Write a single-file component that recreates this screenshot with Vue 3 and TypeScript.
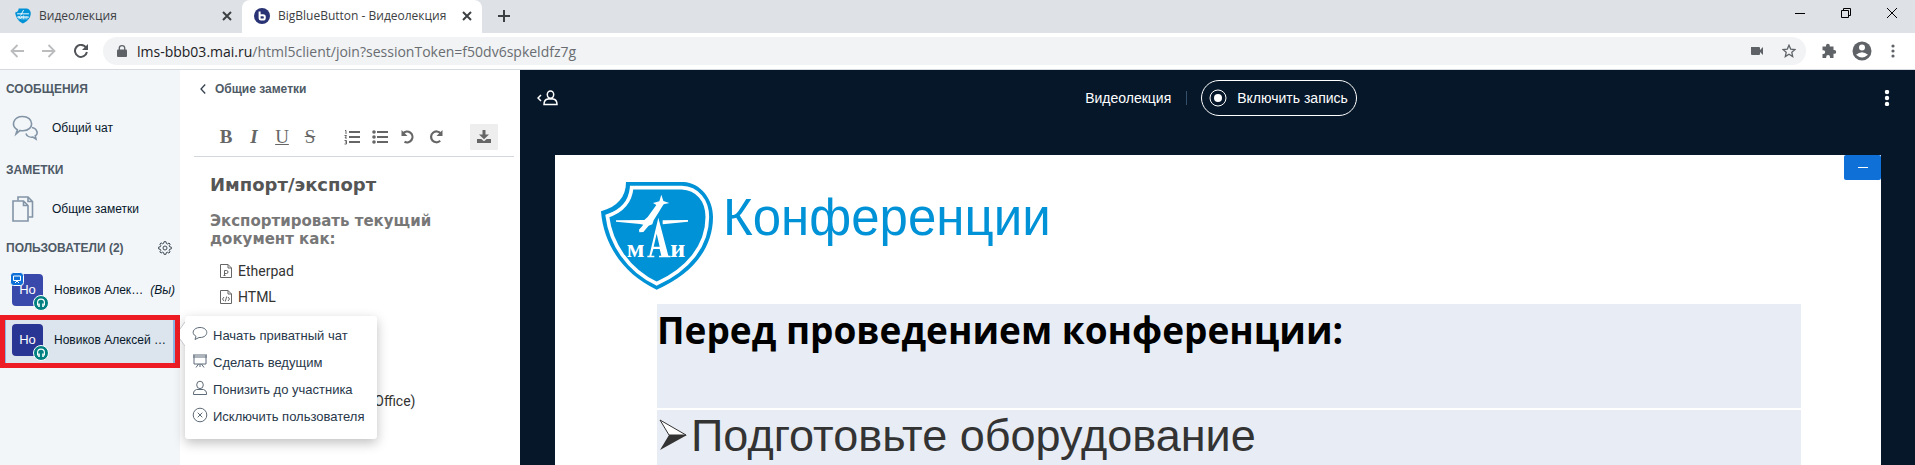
<script setup lang="ts">
interface Participant {
  id: number
  name: string
  you: boolean
  presenter: boolean
  selected: boolean
}

const participants: Participant[] = [
  { id: 1, name: 'Новиков Алексей Михайлович', you: true, presenter: true, selected: false },
  { id: 2, name: 'Новиков Алексей Михайлович', you: false, presenter: false, selected: true },
]

const actions = [
  { icon: 'chat', label: 'Начать приватный чат' },
  { icon: 'present', label: 'Сделать ведущим' },
  { icon: 'user', label: 'Понизить до участника' },
  { icon: 'remove', label: 'Исключить пользователя' },
]

const formats = [
  { label: 'Etherpad', glyph: 'P' },
  { label: 'HTML', glyph: '‹/›' },
  { label: 'ODF (Документ OpenOffice)', glyph: 'O' },
]
</script>

<template>
  <div class="window">
    <header class="tabs">
      <div class="tab">
        <svg class="favicon" viewBox="30 60 344 334" aria-hidden="true">
          <path d="M108 65H265C325 65 369 110 369 170C369 260 310 340 200 388C95 340 45 250 33 153C80 145 108 110 108 65Z" fill="#0092d7" />
          <path d="M75 180L330 180M75 250H330M215 100L150 215" stroke="#fff" stroke-width="20" fill="none" />
          <path d="M115 300V230L145 290L180 230V300M215 300V215M245 300V230M285 230V300" stroke="#fff" stroke-width="16" fill="none" />
        </svg>
        <span class="tab-title">Видеолекция</span>
        <button class="plain" aria-label="Закрыть вкладку">
          <svg width="10" height="10" viewBox="0 0 10 10"><path d="M1 1L9 9M9 1L1 9" stroke="#3c4043" stroke-width="2" /></svg>
        </button>
      </div>
      <div class="tab active">
        <svg class="favicon" viewBox="0 0 16 16" aria-hidden="true">
          <circle cx="8" cy="8" r="8" fill="#283274" />
          <path d="M5.6 3.5V10.2Q5.6 11.6 7 11.6H9Q10.8 11.6 10.8 9.7V9Q10.8 7.2 9 7.2H6" stroke="#fff" stroke-width="2" fill="none" />
        </svg>
        <span class="tab-title">BigBlueButton - Видеолекция</span>
        <button class="plain" aria-label="Закрыть вкладку">
          <svg width="10" height="10" viewBox="0 0 10 10"><path d="M1 1L9 9M9 1L1 9" stroke="#3c4043" stroke-width="2" /></svg>
        </button>
      </div>
      <button class="plain new-tab" aria-label="Новая вкладка">
        <svg width="12" height="12" viewBox="0 0 12 12"><path d="M6 0V12M0 6H12" stroke="#3c4043" stroke-width="2" /></svg>
      </button>
      <div class="window-buttons">
        <button class="plain" aria-label="Свернуть"><svg width="10" height="10" viewBox="0 0 10 10"><path d="M0 5.5H10" stroke="#000" /></svg></button>
        <button class="plain" aria-label="Восстановить"><svg width="10" height="10" viewBox="0 0 10 10"><path d="M.5 2.5H7.5V9.5H.5ZM2.5 2.5V.5H9.5V7.5H7.5" stroke="#000" fill="none" /></svg></button>
        <button class="plain" aria-label="Закрыть"><svg width="10" height="10" viewBox="0 0 10 10"><path d="M0 0L10 10M10 0L0 10" stroke="#000" /></svg></button>
      </div>
    </header>

    <nav class="toolbar" aria-label="Адресная строка">
      <button class="plain" aria-label="Назад"><svg width="14" height="14" viewBox="0 0 14 14"><path d="M14 7H1.5M7.5 1L1.5 7L7.5 13" stroke="#babcbe" stroke-width="1.8" fill="none" /></svg></button>
      <button class="plain" aria-label="Вперёд"><svg width="14" height="14" viewBox="0 0 14 14"><path d="M0 7H12.5M6.5 1L12.5 7L6.5 13" stroke="#babcbe" stroke-width="1.8" fill="none" /></svg></button>
      <button class="plain" aria-label="Обновить"><svg width="14" height="14" viewBox="0 0 14 14"><path d="M11.9 3.4A6 6 0 1 0 12.9 8" stroke="#505357" stroke-width="2" fill="none" /><path d="M14 0V6H8Z" fill="#505357" /></svg></button>
      <div class="address">
        <svg width="10" height="12" viewBox="0 0 10 12" aria-hidden="true"><path d="M1 4.5H9Q10 4.5 10 5.5V11Q10 12 9 12H1Q0 12 0 11V5.5Q0 4.5 1 4.5Z" fill="#5f6368" /><path d="M2.3 5V3A2.7 2.3 0 0 1 7.7 3V5" stroke="#5f6368" stroke-width="1.3" fill="none" /></svg>
        <span class="url"><b>lms-bbb03.mai.ru</b>/html5client/join?sessionToken=f50dv6spkeldfz7g</span>
        <button class="plain" aria-label="Камера"><svg width="14" height="14" viewBox="0 0 14 14"><path d="M1 3H9Q10 3 10 4V6L13 3V11L10 8V10Q10 11 9 11H2Q1 11 1 10Z" fill="#5f6368" /></svg></button>
        <button class="plain" aria-label="Добавить в закладки"><svg width="14" height="14" viewBox="0 0 14 14"><path d="M7 1.2L8.7 5.1L13 5.5L9.8 8.3L10.7 12.6L7 10.3L3.3 12.6L4.2 8.3L1 5.5L5.3 5.1Z" stroke="#5f6368" stroke-width="1.3" fill="none" /></svg></button>
      </div>
      <div class="tools">
        <button class="plain" aria-label="Расширения"><svg width="16" height="16" viewBox="0 0 16 16"><path d="M1.5 3.5H5V2.7A1.9 1.9 0 0 1 8.8 2.7V3.5H12.5V7H13.3A1.9 1.9 0 0 1 13.3 10.8H12.5V15H9V14A1.9 1.9 0 0 0 5.2 14V15H1.5V11H2.3A1.9 1.9 0 0 0 2.3 7.2H1.5Z" fill="#5f6368" /></svg></button>
        <button class="plain" aria-label="Профиль"><svg width="20" height="20" viewBox="0 0 20 20"><circle cx="10" cy="10" r="9.5" fill="#5f6368" /><circle cx="10" cy="6.5" r="3" fill="#fff" /><path d="M4 13.8Q10 8.5 16 13.8Q10 19.2 4 13.8Z" fill="#fff" /></svg></button>
        <button class="plain" aria-label="Меню"><svg width="4" height="14" viewBox="0 0 4 14"><g fill="#5f6368"><circle cx="2" cy="2" r="1.6" /><circle cx="2" cy="7" r="1.6" /><circle cx="2" cy="12" r="1.6" /></g></svg></button>
      </div>
    </nav>

    <div class="client">
      <aside class="sidebar">
        <h2>СООБЩЕНИЯ</h2>
        <button class="plain entry">
          <svg width="26" height="26" viewBox="0 0 26 26" fill="none" stroke="#8294a6" stroke-width="1.6"><path d="M4 19L5.3 14.8C-1.5 10.5 1.5 1.5 10.5 1.5C22 1.5 23 15.5 11 15.8Q9.5 15.9 8 15.5Z" /><path d="M20 12.5C26.2 14 26 19.5 23.3 20.8L24 24L20.8 22C17.5 22.6 14.6 21 14 18.5" /></svg>
          <span>Общий чат</span>
        </button>
        <h2>ЗАМЕТКИ</h2>
        <button class="plain entry">
          <svg width="26" height="26" viewBox="0 0 26 26" fill="none" stroke="#8294a6" stroke-width="1.6"><path d="M1 5H11.5L16 9.5V25H1ZM11.5 5V9.5H16" /><path d="M6 4.5V1H16L20.5 5.5V21H16.5M16 1V5.5H20.5" /></svg>
          <span>Общие заметки</span>
        </button>
        <div class="users-title">
          <h2>ПОЛЬЗОВАТЕЛИ (2)</h2>
          <button class="plain" aria-label="Управление пользователями">
            <svg width="14" height="14" viewBox="0 0 14 14" fill="none" stroke="#3f4b57"><circle cx="7" cy="7" r="2" /><path d="M6 .7H8L8.4 2.5L9.5 3L11 2L12.2 3.2L11.2 4.7L11.6 5.8L13.3 6.1V7.9L11.6 8.3L11.2 9.4L12.1 10.9L10.9 12.1L9.4 11.2L8.3 11.6L8 13.3H6L5.6 11.6L4.5 11.2L3 12.1L1.8 10.9L2.8 9.4L2.3 8.3L.7 8V6L2.4 5.7L2.8 4.6L1.8 3.1L3.1 1.9L4.6 2.8L5.6 2.4Z" /></svg>
          </button>
        </div>
        <div v-for="p in participants" :key="p.id" class="user-frame" :class="{ highlighted: p.selected }">
          <button class="plain user" :class="{ selected: p.selected }">
            <span class="avatar">
              Но
              <svg v-if="p.presenter" class="presenter" width="14" height="14" viewBox="0 0 14 14"><rect x=".5" y=".5" width="13" height="13" rx="3" fill="#0f70d7" stroke="#fff" /><path d="M3.5 4H10.5V8.5H3.5ZM5 11L7 9L9 11" stroke="#fff" fill="none" /></svg>
              <svg class="headset" width="16" height="16" viewBox="0 0 16 16"><circle cx="8" cy="8" r="7.5" fill="#008081" stroke="#fff" /><path d="M4.6 10.5V7.5A3.4 3.4 0 0 1 11.4 7.5V10.5" stroke="#fff" stroke-width="1.2" fill="none" /><path d="M6 8.5V12M10 8.5V12" stroke="#fff" stroke-width="1.6" /></svg>
            </span>
            <span class="name">{{ p.name }}</span>
            <em v-if="p.you">(Вы)</em>
          </button>
          <div v-if="p.selected" class="menu" role="menu">
            <svg class="menu-arrow" width="5" height="24" viewBox="0 0 5 24" aria-hidden="true"><path d="M5 0L0 7V17L5 24Z" fill="#fff" /><path d="M5 0L0 7M0 17L5 24" stroke="#c4c8cc" /></svg>
            <button v-for="a in actions" :key="a.label" class="plain action" role="menuitem">
              <svg width="16" height="16" viewBox="0 0 16 16" fill="none" stroke="#5d6a78">
                <path v-if="a.icon === 'chat'" d="M3 13.5L4 10.3C-1.3 7.5 1.2 1.5 8 1.5C17 1.5 17 11.5 8 11.5H7Z" />
                <path v-else-if="a.icon === 'present'" d="M1 2H15M2 2V11H14V2M1 4H15M8 11V14M6.5 11L4 14.5M9.5 11L12 14.5" />
                <path v-else-if="a.icon === 'user'" d="M8 1.2A3.3 3.7 0 1 0 8 8.6A3.3 3.7 0 1 0 8 1.2ZM1.5 14.5V13Q1.5 10.5 4.5 9.5H11.5Q14.5 10.5 14.5 13V14.5Z" />
                <path v-else d="M8 1.2A6.8 6.8 0 1 0 8 14.8A6.8 6.8 0 1 0 8 1.2ZM5.7 5.7L10.3 10.3M10.3 5.7L5.7 10.3" />
              </svg>
              <span>{{ a.label }}</span>
            </button>
          </div>
        </div>
      </aside>

      <section class="notes">
        <button class="plain notes-title">
          <svg width="6" height="10" viewBox="0 0 6 10"><path d="M5.2 .5L1 5L5.2 9.5" stroke="#34424f" stroke-width="1.3" fill="none" /></svg>
          <span>Общие заметки</span>
        </button>
        <div class="editbar">
          <button class="plain letter bold">B</button>
          <button class="plain letter italic">I</button>
          <button class="plain letter under">U</button>
          <button class="plain letter strike">S</button>
          <button class="plain tool lists" aria-label="Нумерованный список"><svg width="16" height="16" viewBox="0 0 16 16" fill="none" stroke="#666"><path d="M5 3H16M5 8H16M5 13H16" stroke-width="2" /><path d="M1 1.5H2V5M.5 6.5H2.5L1 9H3M.5 11.5H2.5V15H.5M1 13H2.5" /></svg></button>
          <button class="plain tool" aria-label="Маркированный список"><svg width="16" height="16" viewBox="0 0 16 16"><path d="M5 3H16M5 8H16M5 13H16" stroke="#666" stroke-width="2" /><g fill="#666"><circle cx="2" cy="3" r="1.8" /><circle cx="2" cy="8" r="1.8" /><circle cx="2" cy="13" r="1.8" /></g></svg></button>
          <button class="plain tool" aria-label="Отменить"><svg width="16" height="16" viewBox="0 0 16 16"><path d="M3 4.5A5.4 5.4 0 1 1 4.5 12.8" stroke="#666" stroke-width="2.2" fill="none" /><path d="M1.5 1V7H7.5Z" fill="#666" /></svg></button>
          <button class="plain tool" aria-label="Повторить"><svg width="16" height="16" viewBox="0 0 16 16"><path d="M12.7 4.5A5.4 5.4 0 1 0 12.2 11.8" stroke="#666" stroke-width="2.2" fill="none" /><path d="M14.5 1V7H8.5Z" fill="#666" /></svg></button>
          <button class="plain export" aria-label="Импорт/экспорт"><svg width="14" height="14" viewBox="0 0 14 14" fill="#666"><path d="M5.5 0H8.5V4.5H12L7 9.3L2 4.5H5.5Z" /><path d="M0 9H4.3L7 11.3L9.7 9H14V13H0Z" /></svg></button>
        </div>
        <div class="exporter">
          <h1>Импорт/экспорт</h1>
          <h3>Экспортировать текущий документ как:</h3>
          <ul>
            <li v-for="f in formats" :key="f.label">
              <a href="#">
                <svg width="12" height="14" viewBox="0 0 12 14"><path d="M.5 .5H8L11.5 4V13.5H.5ZM8 .5V4H11.5" stroke="#666" fill="none" /><path v-if="f.glyph === 'P'" d="M3.5 11.5H5.5M4.5 11.5V6.5H6.5Q8 6.5 8 8Q8 9.5 6.5 9.5H4.5" stroke="#666" fill="none" /><path v-else d="M4 7L2.5 9L4 11M8 7L9.5 9L8 11M6.7 6.5L5.3 11.5" stroke="#666" fill="none" /></svg>
                {{ f.label }}
              </a>
            </li>
          </ul>
        </div>
      </section>

      <main class="stage">
        <div class="stage-bar">
          <button class="plain" aria-label="Список пользователей"><svg width="21" height="16" viewBox="0 0 21 16" fill="none" stroke="#fff" stroke-width="1.5"><path d="M4 5L1 8L4 11" /><path d="M13.5 1A3.2 3.6 0 1 0 13.5 8.2A3.2 3.6 0 1 0 13.5 1ZM7 14.5Q7 9.5 11 9H16Q20 9.5 20 14.5Z" /></svg></button>
          <div class="recording">
            <span>Видеолекция</span>
            <i class="separator"></i>
            <button class="plain record">
              <svg width="18" height="18" viewBox="0 0 18 18"><circle cx="9" cy="9" r="8" stroke="#fff" fill="none" /><circle cx="9" cy="9" r="4" fill="#fff" /></svg>
              <span>Включить запись</span>
            </button>
          </div>
          <button class="plain" aria-label="Настройки"><svg width="6" height="16" viewBox="0 0 6 16" fill="#fff"><circle cx="3" cy="2" r="2.2" /><circle cx="3" cy="8" r="2.2" /><circle cx="3" cy="14" r="2.2" /></svg></button>
        </div>
        <article class="slide">
          <button class="plain minimize" aria-label="Свернуть презентацию"><svg width="10" height="2" viewBox="0 0 10 2"><path d="M0 .5H10" stroke="#fff" /></svg></button>
          <div class="slide-head">
            <svg width="114" height="110" viewBox="30 62 342 330" role="img" aria-label="МАИ">
              <path d="M108 65H280C332 68 369 115 369 170C369 268 302 344 200 388C98 340 40 250 33 153C82 139 108 110 108 65Z" fill="#0092d7" />
              <path d="M125 82H275C322 84 352 120 352 170C352 258 292 328 200 370C112 328 62 248 52 167C95 153 121 125 125 82Z" fill="none" stroke="#fff" stroke-width="11" />
              <g fill="#fff">
                <path d="M214 103L220 122L238 128L221 132Q213 144 208 153L191 180L187 192L176 196L160 215L148 216L147 208L160 193L150 191L78 184V180L163 179L173 170L199 134L189 128L208 123ZM218 180L294 179V184L218 192Z" />
                <path fill-rule="evenodd" d="M205 172L235 286H242V291H207V286H214L209 266H190L184 286H193V291H172V286H178ZM200 220L191 259H209Z" />
              </g>
              <g class="crest" fill="#fff"><text x="110" y="291" font-size="78">м</text><text x="241" y="291" font-size="78">и</text></g>
            </svg>
            <p>Конференции</p>
          </div>
          <div class="topic"><strong>Перед проведением конференции:</strong></div>
          <div class="step">
            <svg width="29" height="32" viewBox="0 0 29 32" aria-hidden="true"><path d="M1 1L27 16H10Z" fill="#fff" stroke="#333" stroke-width="1" /><path d="M28 16L1 31L10 16Z" fill="#333" /></svg>
            <span>Подготовьте оборудование</span>
          </div>
        </article>
      </main>
    </div>
  </div>
</template>

<style>
body {
  margin: 0;
}
</style>

<style scoped>
* {
  box-sizing: border-box;
}
.window {
  display: flex;
  flex-direction: column;
  height: 100vh;
  overflow: hidden;
  font-family: "Liberation Sans", Arial, sans-serif;
  font-size: 12px;
  color: #06172a;
}
h1, h2, h3, p, ul {
  margin: 0;
  padding: 0;
}
svg {
  display: block;
  flex: none;
}
.plain {
  display: flex;
  align-items: center;
  padding: 0;
  border: 0;
  background: none;
  font: inherit;
  color: inherit;
  text-align: left;
  white-space: nowrap;
  cursor: pointer;
}

/* Browser frame */
.tabs {
  display: flex;
  flex: none;
  height: 33px;
  background: #dee1e6;
  font: 12px "Open Sans", sans-serif;
  color: #3c4043;
}
.tab {
  display: flex;
  align-items: center;
  gap: 8px;
  width: 242px;
  padding: 0 10px 2px 15px;
}
.tab.active {
  width: 240px;
  padding-left: 12px;
  border-radius: 8px 8px 0 0;
  background: #fff;
}
.favicon {
  width: 16px;
  height: 16px;
}
.tab-title {
  flex: 1;
  white-space: nowrap;
}
.new-tab {
  padding: 0 16px 1px;
}
.window-buttons {
  display: flex;
  gap: 36px;
  margin-left: auto;
  padding: 0 18px 7px 0;
}
.toolbar {
  display: flex;
  align-items: center;
  flex: none;
  gap: 18px;
  height: 37px;
  padding: 0 20px 0 10px;
  border-bottom: 1px solid #d6d9dd;
  background: #fff;
}
.address {
  display: flex;
  align-items: center;
  flex: 1;
  gap: 18px;
  height: 28px;
  margin: 0 -3px;
  padding: 0 10px 0 14px;
  border-radius: 14px;
  background: #f1f3f4;
}
.url {
  flex: 1;
  margin-left: -8px;
  font: 14px "Open Sans", sans-serif;
  color: #696d72;
}
.url b {
  font-weight: 400;
  color: #202124;
}
.tools {
  display: flex;
  align-items: center;
  gap: 15px;
}
.tools .plain:last-child {
  margin-left: 4px;
}

/* Conference client */
.client {
  display: flex;
  flex: 1;
  min-height: 0;
}
.sidebar {
  flex: none;
  width: 180px;
  padding-top: 11px;
  background: #f3f6f9;
}
h2 {
  padding-left: 6px;
  font-size: 12px;
  line-height: 16px;
  font-weight: 700;
  color: #4e5a66;
}
.entry {
  gap: 14px;
  height: 46px;
  margin: 8px 0 11px;
  padding-left: 12px;
}
.users-title {
  display: flex;
  align-items: center;
  justify-content: space-between;
  padding-right: 8px;
  margin-top: -3px;
  margin-bottom: 9px;
}
.user-frame {
  position: relative;
  height: 50px;
}
.user-frame.highlighted {
  height: 53px;
  border: 5px solid #ed1c24;
}
.user {
  width: 100%;
  height: 100%;
  padding: 0 5px 0 12px;
}
.user.selected {
  padding: 0 3px 4px 6px;
  border-left: 1px solid #8ab6e6;
  border-right: 2px solid #8ab6e6;
  background: #dce4ed;
}
.avatar {
  position: relative;
  flex: none;
  width: 31px;
  margin-right: 11px;
  border-radius: 4px;
  background: #3949ab;
  color: #fff;
  font-size: 13px;
  line-height: 32px;
  text-align: center;
}
.selected .avatar {
  background: #283593;
}
.presenter {
  position: absolute;
  top: -2px;
  left: -2px;
}
.headset {
  position: absolute;
  right: -6px;
  bottom: -5px;
}
.name {
  flex: 1;
  overflow: hidden;
  text-overflow: ellipsis;
}
em {
  margin-left: 4px;
}

/* Participant actions pop-up */
.menu {
  position: absolute;
  z-index: 2;
  top: -4px;
  left: 180px;
  width: 192px;
  padding: 6px 7px 9px;
  border-radius: 3px;
  background: #fff;
  box-shadow: 0 4px 12px rgba(0, 0, 0, 0.25);
}
.menu-arrow {
  position: absolute;
  top: 6px;
  left: -5px;
}
.action {
  gap: 5px;
  width: 100%;
  height: 27px;
  font-size: 13px;
  color: #28384a;
}
.action svg {
  margin-top: -4px;
}

/* Shared notes */
.notes {
  flex: none;
  width: 340px;
  overflow: hidden;
  background: #fff;
}
.notes-title {
  gap: 9px;
  height: 16px;
  margin: 11px 0 0 20px;
  font-size: 12px;
  font-weight: 700;
  color: #4e5a66;
}
.editbar {
  display: flex;
  align-items: center;
  height: 39px;
  margin: 21px 6px 0 14px;
  padding: 0 16px 0 18px;
  border-bottom: 1px solid #d2d8dd;
}
.letter {
  justify-content: center;
  width: 28px;
  font: 19px "Liberation Serif", serif;
  color: #666;
}
.bold {
  font-weight: 700;
}
.italic {
  font-style: italic;
  font-weight: 700;
}
.under {
  text-decoration: underline;
}
.strike {
  text-decoration: line-through;
}
.tool {
  justify-content: center;
  width: 28px;
}
.lists {
  margin-left: 14px;
}
.export {
  justify-content: center;
  width: 28px;
  height: 26px;
  margin-left: auto;
  border-radius: 1px;
  background: #eee;
}
.exporter {
  padding: 16px 60px 0 30px;
  font-family: "DejaVu Sans", Verdana, sans-serif;
}
h1 {
  font-size: 18px;
  line-height: 24px;
  color: #555;
}
h3 {
  margin: 15px 0 10px;
  font-size: 15px;
  line-height: 18px;
  color: #777;
}
li {
  list-style: none;
  padding-left: 10px;
}
li:last-child {
  margin-top: 78px;
}
li a {
  display: flex;
  align-items: center;
  gap: 6px;
  height: 26px;
  font: 14px Roboto, sans-serif;
  color: #333;
  text-decoration: none;
  white-space: nowrap;
}

/* Presentation */
.stage {
  display: flex;
  flex-direction: column;
  flex: 1;
  min-width: 0;
  background: #06172a;
}
.stage-bar {
  display: flex;
  align-items: center;
  justify-content: space-between;
  flex: none;
  height: 85px;
  padding: 0 25px 29px 17px;
  color: #fff;
  font-size: 14px;
}
.recording {
  display: flex;
  align-items: center;
}
.separator {
  width: 1px;
  height: 14px;
  margin: 0 14px 0 15px;
  background: #34506b;
}
.record {
  gap: 10px;
  height: 36px;
  padding: 0 8px 0 7px;
  border: 1px solid #fff;
  border-radius: 18px;
}
.slide {
  position: relative;
  display: flex;
  flex-direction: column;
  flex: 1;
  min-height: 0;
  margin: 0 34px 0 35px;
  background: #fff;
}
.minimize {
  position: absolute;
  top: 0;
  right: 0;
  justify-content: center;
  width: 37px;
  height: 25px;
  border-radius: 2px;
  background: #0f70d7;
}
.slide-head {
  display: flex;
  flex: none;
  gap: 9px;
  height: 149px;
  padding: 26px 0 0 45px;
}
.crest {
  font-family: "Liberation Serif", serif;
  font-weight: 700;
}
.slide-head p {
  font-size: 51px;
  line-height: 74px;
  color: #0092d7;
}
.topic,
.step {
  margin: 0 80px 0 102px;
  background: #e8ecf4;
  white-space: nowrap;
}
.topic {
  flex: none;
  height: 104px;
  margin-bottom: 2px;
  font: 37px/52px "Open Sans", sans-serif;
  color: #000;
}
.step {
  display: flex;
  align-items: flex-start;
  gap: 3px;
  flex: 1;
  padding-left: 2px;
  font-size: 45px;
  line-height: 52px;
  color: #333;
}
.step svg {
  margin-top: 9px;
}
</style>
